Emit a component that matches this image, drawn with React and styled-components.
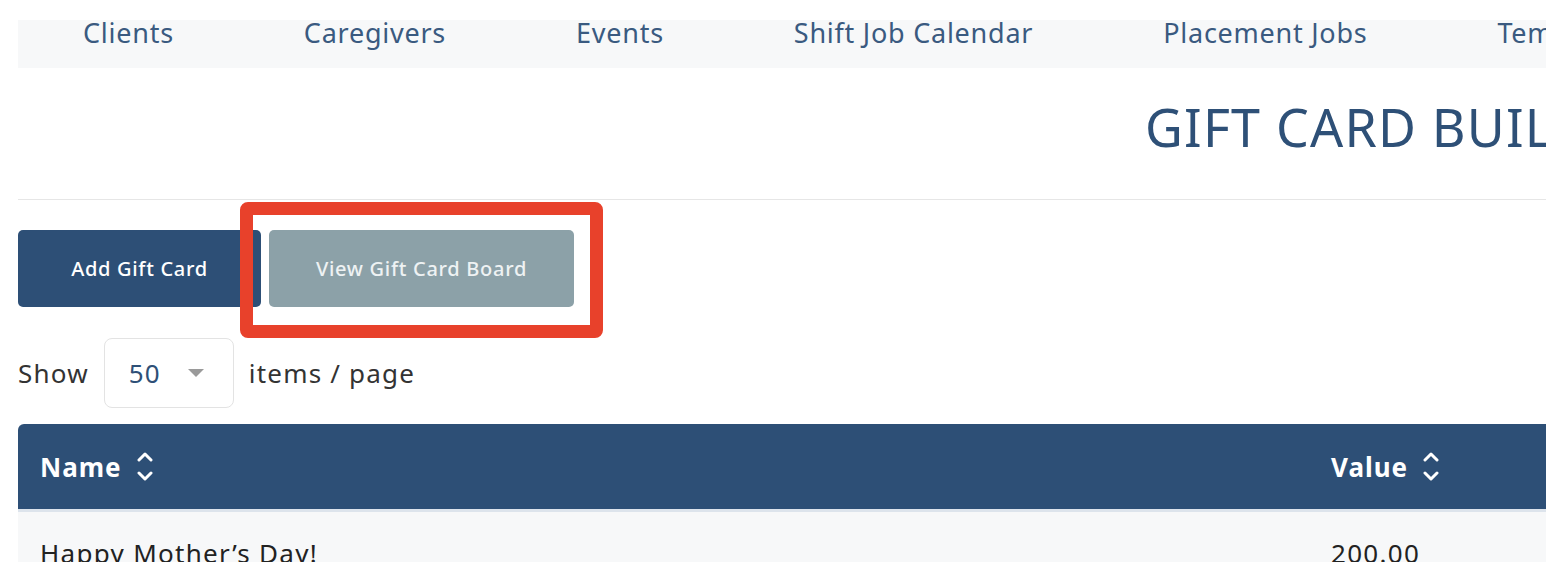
import React from 'react';
import styled, { createGlobalStyle } from 'styled-components';

const GlobalStyle = createGlobalStyle`
  html, body {
    margin: 0;
    padding: 0;
    background: #ffffff;
    overflow: hidden;
  }
  body {
    font-family: "Noto Sans", "Open Sans", sans-serif;
    color: #333333;
  }
`

const navItems = ['Clients', 'Caregivers', 'Events', 'Shift Job Calendar', 'Placement Jobs', 'Templates']

function SortIcon() {
  return <StyledSortIcon width="16" height="32" viewBox="0 0 16 32" fill="none" stroke="currentColor" strokeWidth="3" strokeLinecap="round" strokeLinejoin="round">
    <path d="M2 9 L8 3 L14 9" />
    <path d="M2 22 L8 28 L14 22" />
  </StyledSortIcon>
}

function App() {
  return <StyledPage>
    <GlobalStyle />
    <StyledNav>
      {navItems.map(item => <StyledNavItem key={item}>{item}</StyledNavItem>)}
    </StyledNav>

    <StyledHeader>
      <StyledTitle>GIFT CARD BUILDER</StyledTitle>
    </StyledHeader>

    <StyledActions>
      <StyledButton $width={243}>Add Gift Card</StyledButton>
      <StyledHighlight>
        <StyledButton $width={305} $muted>View Gift Card Board</StyledButton>
      </StyledHighlight>
    </StyledActions>

    <StyledPager>
      <span>Show</span>
      <StyledSelect>
        <span>50</span>
        <StyledCaret />
      </StyledSelect>
      <span>items / page</span>
    </StyledPager>

    <StyledTable>
      <StyledHeadRow>
        <StyledHeadCell>Name <SortIcon /></StyledHeadCell>
        <StyledHeadCell>Value <SortIcon /></StyledHeadCell>
      </StyledHeadRow>
      <StyledRow>
        <StyledCell>Happy Mother’s Day!</StyledCell>
        <StyledCell>200.00</StyledCell>
      </StyledRow>
    </StyledTable>
  </StyledPage>
}

const StyledPage = styled.div`
  padding: 20px 0 0 18px;
  width: 1900px;
`
const StyledNav = styled.nav`
  display: flex;
  align-items: flex-start;
  height: 48px;
  background: #f7f8f9;
  white-space: nowrap;
`
const StyledNavItem = styled.a`
  padding: 0 65px;
  font-size: 27px;
  line-height: 26px;
  letter-spacing: 0.75px;
  color: #3a5a80;
  cursor: pointer;
`
const StyledHeader = styled.div`
  padding: 22px 0 36px 1127px;
  border-bottom: 1px solid #e6e6e6;
`
const StyledTitle = styled.h1`
  margin: 0;
  font-size: 52px;
  font-weight: 400;
  line-height: 73px;
  letter-spacing: 1.2px;
  color: #2e5077;
  white-space: nowrap;
`
const StyledActions = styled.div`
  display: flex;
  gap: 8px;
  margin-top: 30px;
`
const StyledButton = styled.button`
  width: ${props => props.$width}px;
  height: 77px;
  border: none;
  border-radius: 5px;
  background: ${props => props.$muted ? '#8ca1a8' : '#2d4f76'};
  color: ${props => props.$muted ? '#eef2f3' : '#ffffff'};
  font-family: "Noto Sans", sans-serif;
  font-size: 20px;
  font-weight: 500;
  letter-spacing: 0.7px;
  cursor: pointer;
`
const StyledHighlight = styled.span`
  position: relative;
  display: inline-flex;

  &::after {
    content: '';
    position: absolute;
    top: -28px;
    left: -29px;
    right: -29px;
    bottom: -31px;
    border: 13px solid #e8412b;
    border-radius: 8px;
    pointer-events: none;
  }
`
const StyledPager = styled.div`
  display: flex;
  align-items: center;
  gap: 15px;
  margin-top: 31px;
  font-size: 26px;
  letter-spacing: 1.2px;
  color: #333333;
`
const StyledSelect = styled.div`
  display: flex;
  align-items: center;
  justify-content: space-between;
  box-sizing: border-box;
  width: 130px;
  height: 70px;
  padding: 0 29px 0 24px;
  border: 1px solid #e3e3e3;
  border-radius: 8px;
  color: #2e5077;
`
const StyledCaret = styled.span`
  width: 0;
  height: 0;
  border-left: 8px solid transparent;
  border-right: 8px solid transparent;
  border-top: 8px solid #9a9a9a;
`
const StyledTable = styled.div`
  margin-top: 16px;
`
const StyledHeadRow = styled.div`
  display: grid;
  grid-template-columns: 1291px 1fr;
  height: 85px;
  align-items: center;
  background: #2d4f76;
  border-radius: 6px 6px 0 0;
  border-bottom: 3px solid #dde4ec;
`
const StyledHeadCell = styled.div`
  display: flex;
  align-items: center;
  gap: 15px;
  padding-left: 22px;
  color: #ffffff;
  font-size: 26px;
  font-weight: 700;
  letter-spacing: 1px;
`
const StyledSortIcon = styled.svg`
  display: block;
`
const StyledRow = styled.div`
  display: grid;
  grid-template-columns: 1291px 1fr;
  padding: 23px 0 30px;
  background: #f7f8f9;
`
const StyledCell = styled.div`
  padding-left: 22px;
  font-size: 26px;
  letter-spacing: 1.3px;
  color: #222222;
`

export default App;
